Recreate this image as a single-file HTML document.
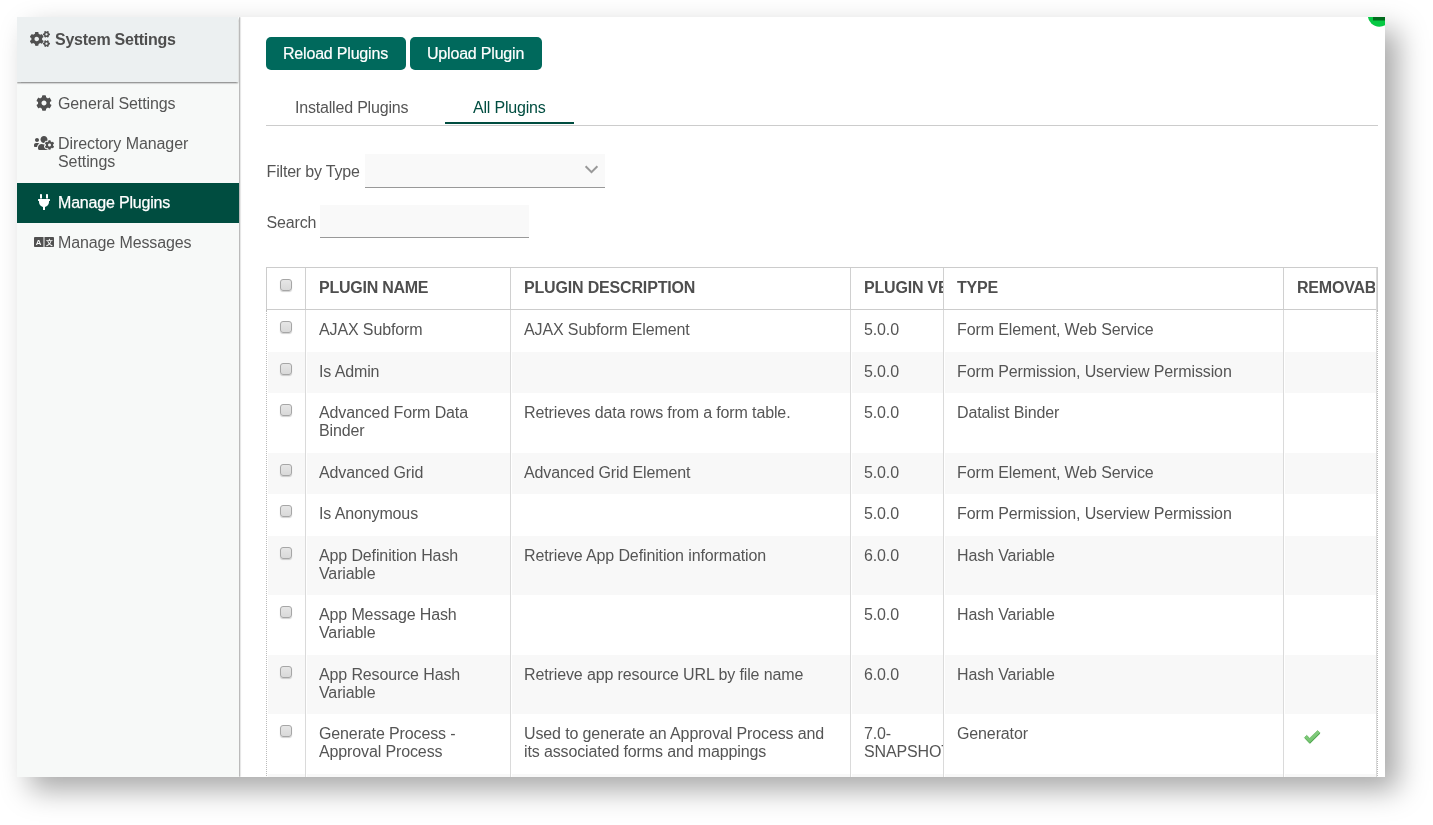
<!DOCTYPE html>
<html lang="en"><head><meta charset="utf-8"><title>Manage Plugins</title>
<style>
html,body{margin:0;padding:0;background:#fff;}
body{width:1433px;height:825px;overflow:hidden;position:relative;font-family:"Liberation Sans",Arial,sans-serif;font-size:16px;line-height:18px;letter-spacing:-0.19px;color:#555;}
#clip *{box-sizing:border-box}
#panel{position:absolute;left:17px;top:17px;width:1368px;height:760px;background:#fff;box-shadow:13px 13px 27px rgba(0,0,0,.34);}
#clip{position:absolute;left:0;top:0;width:1368px;height:760px;overflow:hidden;will-change:transform;}
#clip div,#clip span,#clip svg{position:absolute;}
#side{left:0;top:0;width:222px;height:760px;background:#f7f9f8;box-shadow:1px 0 1.5px rgba(0,0,0,.36);}
#shead{left:0;top:0;width:221px;height:65px;background:#ecf0f1;box-shadow:0 1.5px 1.5px rgba(0,0,0,.38);}
.t{white-space:nowrap;}
.b{font-weight:bold;letter-spacing:-0.25px;}
.btn{background:#00695c;border-radius:5px;color:#fff;height:33px;top:20px;}
.btn span{top:8px;-webkit-text-stroke:0.2px #fff;}
.inp{background:#f9f9f9;border-bottom:1px solid #999;}
.cb{width:12px;height:12px;border:1px solid #a6a6a6;border-radius:3px;background:linear-gradient(#e6e6e6,#d9d9d9);box-shadow:0 1px 1px rgba(0,0,0,.18);}
.st{background:#f8f8f8;}
.vl{width:2px;background:#fff;}
.vl i{position:absolute;left:0;top:0;bottom:0;width:1px;background:#dadada;}
.cell{overflow:hidden;}
.cell span{left:0;top:0;white-space:nowrap;letter-spacing:-0.125px;}
.cell span.b{letter-spacing:-0.25px;}
</style></head><body>
<div id="panel"><div id="clip">

<div id="side"></div><div id="shead"></div>
<svg style="left:13px;top:14px" width="20" height="16" viewBox="0 0 640 512"><path fill="#505050" d="M512.1 191l-8.2 14.3c-3 5.3-9.4 7.5-15.1 5.4-11.8-4.4-22.6-10.7-32.100-18.600-4.600-3.800-5.800-10.500-2.800-15.700l8.200-14.300c-6.900-8-12.300-17.300-15.900-27.400h-16.500c-6 0-11.200-4.300-12.200-10.300-2-12-2.100-24.600 0-37.100 1-6 6.200-10.400 12.200-10.400h16.500c3.600-10.100 9-19.400 15.900-27.400l-8.200-14.300c-3-5.200-1.900-11.900 2.800-15.700 9.500-7.900 20.400-14.200 32.100-18.600 5.700-2.100 12.100.1 15.100 5.400l8.200 14.300c10.500-1.900 21.200-1.900 31.700 0L552 6.300c3-5.300 9.400-7.500 15.100-5.400 11.800 4.400 22.600 10.700 32.100 18.600 4.600 3.800 5.800 10.500 2.800 15.700l-8.200 14.300c6.900 8 12.300 17.300 15.900 27.400h16.500c6 0 11.200 4.300 12.200 10.300 2 12 2.100 24.600 0 37.100-1 6-6.200 10.400-12.200 10.400h-16.500c-3.600 10.100-9 19.400-15.900 27.400l8.200 14.300c3 5.200 1.900 11.900-2.800 15.700-9.500 7.900-20.400 14.200-32.100 18.600-5.700 2.100-12.100-.1-15.100-5.400l-8.200-14.300c-10.400 1.900-21.200 1.900-31.700 0zm-10.500-58.800c38.500 29.600 82.400-14.300 52.800-52.800-38.500-29.700-82.400 14.300-52.800 52.800zM386.300 286.100l33.700 16.800c10.100 5.800 14.500 18.100 10.500 29.100-8.900 24.200-26.400 46.400-42.600 65.800-7.400 8.900-20.200 11.100-30.300 5.300l-29.100-16.800c-16 13.700-34.600 24.600-54.900 31.700v33.600c0 11.600-8.300 21.600-19.700 23.600-24.600 4.200-50.400 4.400-75.900 0-11.500-2-20-11.900-20-23.600V418c-20.300-7.200-38.900-18-54.900-31.700L74 403c-10 5.800-22.900 3.600-30.300-5.300-16.200-19.400-33.300-41.600-42.200-65.700-4-10.900.4-23.200 10.500-29.100l33.300-16.800c-3.900-20.900-3.900-42.400 0-63.400L12 205.800c-10.100-5.800-14.600-18.100-10.500-29 8.900-24.200 26-46.400 42.200-65.800 7.400-8.900 20.200-11.100 30.300-5.300l29.100 16.800c16-13.700 34.600-24.600 54.900-31.700V57.100c0-11.500 8.200-21.500 19.600-23.500 24.600-4.200 50.500-4.400 76-.1 11.500 2 20 11.900 20 23.600v33.600c20.300 7.200 38.900 18 54.900 31.700l29.100-16.800c10-5.800 22.900-3.600 30.300 5.300 16.200 19.400 33.200 41.600 42.100 65.800 4 10.900.1 23.200-10 29.100l-33.700 16.800c3.900 21 3.900 42.500 0 63.500zm-117.600 21.100c59.200-77-28.700-164.900-105.700-105.700-59.200 77 28.700 164.900 105.700 105.700zm243.400 182.700l-8.200 14.300c-3 5.300-9.400 7.500-15.100 5.400-11.800-4.400-22.600-10.700-32.100-18.600-4.600-3.800-5.800-10.500-2.800-15.700l8.200-14.300c-6.900-8-12.300-17.300-15.900-27.400h-16.500c-6 0-11.200-4.300-12.200-10.300-2-12-2.100-24.600 0-37.100 1-6 6.200-10.400 12.200-10.400h16.500c3.600-10.100 9-19.400 15.900-27.400l-8.200-14.300c-3-5.200-1.900-11.900 2.800-15.700 9.500-7.900 20.400-14.200 32.100-18.600 5.700-2.100 12.100.1 15.100 5.400l8.200 14.300c10.500-1.900 21.200-1.900 31.700 0l8.200-14.300c3-5.300 9.400-7.500 15.100-5.400 11.800 4.400 22.600 10.700 32.100 18.600 4.600 3.800 5.800 10.500 2.800 15.700l-8.200 14.300c6.900 8 12.300 17.300 15.900 27.400h16.500c6 0 11.200 4.300 12.200 10.300 2 12 2.100 24.600 0 37.100-1 6-6.200 10.400-12.200 10.400h-16.500c-3.600 10.100-9 19.400-15.900 27.400l8.200 14.300c3 5.200 1.900 11.900-2.800 15.700-9.500 7.900-20.400 14.200-32.100 18.600-5.700 2.100-12.100-.1-15.100-5.400l-8.200-14.300c-10.400 1.900-21.200 1.900-31.700 0zM501.600 431c38.500 29.600 82.400-14.300 52.800-52.800-38.500-29.600-82.400 14.300-52.800 52.800z"/></svg>
<span class="t b" style="left:38px;top:14px;color:#4e4e4e">System Settings</span>
<svg style="left:19px;top:78px" width="16" height="16" viewBox="0 0 512 512"><path fill="#505050" d="M487.4 315.7l-42.6-24.6c4.3-23.2 4.3-47 0-70.2l42.6-24.6c4.9-2.8 7.1-8.6 5.5-14-11.1-35.6-30-67.8-54.7-94.6-3.8-4.1-10-5.1-14.8-2.300L380.8 110c-17.9-15.400-38.500-27.300-60.800-35.100V25.800c0-5.600-3.900-10.500-9.400-11.700-36.700-8.200-74.300-7.800-109.200 0-5.500 1.200-9.400 6.100-9.400 11.700V75c-22.200 7.900-42.800 19.800-60.800 35.100L88.700 85.500c-4.900-2.800-11-1.900-14.800 2.300-24.700 26.700-43.600 58.900-54.700 94.600-1.700 5.400.6 11.200 5.500 14L67.300 221c-4.300 23.200-4.300 47 0 70.200l-42.600 24.600c-4.900 2.800-7.100 8.600-5.500 14 11.100 35.600 30 67.800 54.700 94.600 3.800 4.100 10 5.100 14.800 2.300l42.600-24.600c17.900 15.400 38.500 27.300 60.800 35.100v49.200c0 5.600 3.900 10.500 9.400 11.700 36.700 8.200 74.300 7.800 109.200 0 5.500-1.200 9.400-6.100 9.400-11.700v-49.200c22.200-7.900 42.800-19.800 60.800-35.100l42.600 24.600c4.900 2.800 11 1.900 14.800-2.300 24.700-26.700 43.600-58.900 54.700-94.600 1.500-5.500-.7-11.300-5.600-14.100zM256 336c-44.100 0-80-35.900-80-80s35.900-80 80-80 80 35.900 80 80-35.900 80-80 80z"/></svg>
<span class="t" style="left:41px;top:78px;letter-spacing:-0.11px">General Settings</span>
<svg style="left:17px;top:118px" width="20" height="16" viewBox="0 0 640 512"><path fill="#505050" d="M610.5 341.3c2.600-14.100 2.600-28.500 0-42.600l25.800-14.900c3-1.700 4.300-5.200 3.300-8.500-6.700-21.600-18.200-41.200-33.200-57.400-2.300-2.500-6-3.100-9-1.400l-25.800 14.900c-10.900-9.300-23.400-16.500-36.900-21.300v-29.800c0-3.400-2.400-6.400-5.700-7.100-22.300-5-45-4.800-66.200 0-3.300.7-5.700 3.700-5.700 7.100v29.800c-13.500 4.800-26 12-36.900 21.300l-25.800-14.900c-2.900-1.700-6.700-1.100-9 1.400-15 16.200-26.500 35.800-33.200 57.400-1 3.300.4 6.800 3.300 8.500l25.800 14.900c-2.600 14.100-2.600 28.500 0 42.600l-25.800 14.900c-3 1.700-4.300 5.200-3.300 8.500 6.700 21.600 18.200 41.100 33.200 57.400 2.300 2.500 6 3.100 9 1.400l25.800-14.900c10.900 9.300 23.400 16.500 36.900 21.300v29.800c0 3.400 2.400 6.400 5.700 7.100 22.300 5 45 4.800 66.200 0 3.300-.7 5.700-3.700 5.700-7.100v-29.800c13.500-4.800 26-12 36.900-21.300l25.800 14.900c2.900 1.700 6.700 1.100 9-1.400 15-16.200 26.500-35.800 33.200-57.400 1-3.300-.4-6.800-3.300-8.500l-25.800-14.900zM496 368.500c-26.800 0-48.500-21.800-48.500-48.500s21.800-48.500 48.500-48.500 48.500 21.800 48.500 48.500-21.700 48.500-48.500 48.500zM96 224c35.300 0 64-28.700 64-64s-28.700-64-64-64-64 28.700-64 64 28.700 64 64 64zm224 32c1.900 0 3.700-.5 5.600-.6 8.300-21.700 20.500-42.100 36.300-59.200 7.400-8 17.900-12.600 28.900-12.600 6.900 0 13.700 1.800 19.600 5.300l7.900 4.600c.8-.5 1.600-.9 2.400-1.400 7-14.600 11.200-30.800 11.200-48 0-61.900-50.100-112-112-112S208 82.100 208 144c0 61.900 50.100 112 112 112zm105.200 194.500c-2.300-1.200-4.600-2.600-6.800-3.900-8.200 4.800-15.300 9.800-27.500 9.800-10.900 0-21.400-4.600-28.900-12.600-18.300-19.800-32.300-43.900-40.200-69.600-10.700-34.500 24.900-49.700 25.800-50.300-.1-2.600-.1-5.200 0-7.800l-7.900-4.600c-3.800-2.200-7-5-9.800-8.100-3.300.2-6.500.6-9.800.6-24.600 0-47.600-6-68.500-16h-8.300C179.600 288 128 339.600 128 403.200V432c0 26.500 21.500 48 48 48h255.400c-3.700-6-6.200-12.800-6.200-20.300v-9.200zM173.100 274.600C161.500 263.100 145.600 256 128 256H64c-35.300 0-64 28.700-64 64v32c0 17.700 14.300 32 32 32h65.900c6.300-47.400 34.900-87.300 75.200-109.400z"/></svg>
<span class="t" style="left:41px;top:118px;letter-spacing:-0.08px">Directory Manager<br>Settings</span>
<div style="left:0;top:166px;width:222px;height:40px;background:#004d40"></div>
<svg style="left:21px;top:177px" width="12" height="16" viewBox="0 0 384 512"><path fill="#fff" d="M256 144V32c0-17.673 14.327-32 32-32s32 14.327 32 32v112h-64zm112 16H16c-8.837 0-16 7.163-16 16v32c0 8.837 7.163 16 16 16h16v32c0 77.406 54.969 141.971 128 156.796V512h64v-99.204c73.031-14.825 128-79.390 128-156.796v-32h16c8.837 0 16-7.163 16-16v-32c0-8.837-7.163-16-16-16zm-240-16V32c0-17.673-14.327-32-32-32S64 14.327 64 32v112h64z"/></svg>
<span class="t" style="left:41px;top:177px;color:#fff;-webkit-text-stroke:0.25px #fff">Manage Plugins</span>
<svg style="left:17px;top:217px" width="20" height="16" viewBox="0 0 640 512"><g fill="#505050"><path d="M0 120v272c0 13 11 24 24 24h280V96H24C11 96 0 107 0 120z"/><path d="M616 96H336v320h280c13 0 24-11 24-24V120c0-13-11-24-24-24z"/></g>
<text x="146" y="346" font-family="Liberation Sans" font-weight="bold" font-size="250" text-anchor="middle" fill="#f7f9f8" letter-spacing="0">A</text>
<text x="488" y="338" font-family="Noto Sans CJK SC" font-weight="bold" font-size="215" text-anchor="middle" fill="#f7f9f8" letter-spacing="0">文</text></svg>
<span class="t" style="left:41px;top:217px;letter-spacing:-0.12px">Manage Messages</span>
<div class="btn" style="left:249px;width:140px"><span class="t" style="left:17px">Reload Plugins</span></div>
<div class="btn" style="left:393px;width:132px"><span class="t" style="left:17px">Upload Plugin</span></div>
<span class="t" style="left:278px;top:82px">Installed Plugins</span>
<span class="t" style="left:456px;top:82px;color:#004d40">All Plugins</span>
<div style="left:249px;top:108px;width:1112px;height:1px;background:#ccc"></div>
<div style="left:428px;top:105px;width:129px;height:2px;background:#004d40"></div>
<span class="t" style="left:249.60000000000002px;top:146px">Filter by Type</span>
<div class="inp" style="left:348px;top:137px;width:240px;height:34px"></div>
<svg style="left:567px;top:147px" width="15" height="11" viewBox="0 0 15 11"><path d="M1.6 2.2 L7.5 8.1 L13.4 2.2" fill="none" stroke="#999" stroke-width="2"/></svg>
<span class="t" style="left:249.60000000000002px;top:197px">Search</span>
<div class="inp" style="left:303px;top:188px;width:209px;height:33px"></div>
<div style="left:249px;top:250px;width:1112px;height:43px;border:1px solid #ccc"></div>
<div style="left:249px;top:293px;width:1112px;height:480px;border-left:1px dotted #bbb;border-right:1px dotted #bbb"></div>
<div class="st" style="left:251px;top:335px;width:1108px;height:41px"></div>
<div class="st" style="left:251px;top:436px;width:1108px;height:41px"></div>
<div class="st" style="left:251px;top:519px;width:1108px;height:59px"></div>
<div class="st" style="left:251px;top:638px;width:1108px;height:59px"></div>
<div class="st" style="left:251px;top:757px;width:1108px;height:3px"></div>
<div class="vl" style="left:288px;top:293px;height:480px"><i></i></div>
<div style="left:288px;top:251px;width:1px;height:41px;background:#d0d0d0"></div>
<div class="vl" style="left:493px;top:293px;height:480px"><i></i></div>
<div style="left:493px;top:251px;width:1px;height:41px;background:#d0d0d0"></div>
<div class="vl" style="left:833px;top:293px;height:480px"><i></i></div>
<div style="left:833px;top:251px;width:1px;height:41px;background:#d0d0d0"></div>
<div class="vl" style="left:926px;top:293px;height:480px"><i></i></div>
<div style="left:926px;top:251px;width:1px;height:41px;background:#d0d0d0"></div>
<div class="vl" style="left:1266px;top:293px;height:480px"><i></i></div>
<div style="left:1266px;top:251px;width:1px;height:41px;background:#d0d0d0"></div>
<div style="left:1359px;top:251px;width:1px;height:520px;background:#dadada"></div>
<div class="cb" style="left:263px;top:262px"></div>
<div class="cell" style="left:302px;top:262px;width:191px;height:20px"><span class="b" style="color:#4e4e4e;letter-spacing:-0.25px">PLUGIN NAME</span></div>
<div class="cell" style="left:507px;top:262px;width:326px;height:20px"><span class="b" style="color:#4e4e4e;letter-spacing:-0.17px">PLUGIN DESCRIPTION</span></div>
<div class="cell" style="left:847px;top:262px;width:79px;height:20px"><span class="b" style="color:#4e4e4e;letter-spacing:-0.2px">PLUGIN VERSION</span></div>
<div class="cell" style="left:940px;top:262px;width:326px;height:20px"><span class="b" style="color:#4e4e4e;letter-spacing:-0.2px">TYPE</span></div>
<div class="cell" style="left:1280px;top:262px;width:78px;height:20px"><span class="b" style="color:#4e4e4e;letter-spacing:-0.2px">REMOVABLE</span></div>
<div class="cb" style="left:263px;top:304px"></div>
<div class="cell" style="left:302px;top:304px;width:191px;height:40px"><span>AJAX Subform</span></div>
<div class="cell" style="left:507px;top:304px;width:326px;height:40px"><span>AJAX Subform Element</span></div>
<div class="cell" style="left:847px;top:304px;width:79px;height:40px"><span>5.0.0</span></div>
<div class="cell" style="left:940px;top:304px;width:326px;height:40px"><span>Form Element, Web Service</span></div>
<div class="cb" style="left:263px;top:346px"></div>
<div class="cell" style="left:302px;top:346px;width:191px;height:40px"><span>Is Admin</span></div>
<div class="cell" style="left:847px;top:346px;width:79px;height:40px"><span>5.0.0</span></div>
<div class="cell" style="left:940px;top:346px;width:326px;height:40px"><span>Form Permission, Userview Permission</span></div>
<div class="cb" style="left:263px;top:387px"></div>
<div class="cell" style="left:302px;top:387px;width:191px;height:40px"><span>Advanced Form Data<br>Binder</span></div>
<div class="cell" style="left:507px;top:387px;width:326px;height:40px"><span>Retrieves data rows from a form table.</span></div>
<div class="cell" style="left:847px;top:387px;width:79px;height:40px"><span>5.0.0</span></div>
<div class="cell" style="left:940px;top:387px;width:326px;height:40px"><span>Datalist Binder</span></div>
<div class="cb" style="left:263px;top:447px"></div>
<div class="cell" style="left:302px;top:447px;width:191px;height:40px"><span>Advanced Grid</span></div>
<div class="cell" style="left:507px;top:447px;width:326px;height:40px"><span>Advanced Grid Element</span></div>
<div class="cell" style="left:847px;top:447px;width:79px;height:40px"><span>5.0.0</span></div>
<div class="cell" style="left:940px;top:447px;width:326px;height:40px"><span>Form Element, Web Service</span></div>
<div class="cb" style="left:263px;top:488px"></div>
<div class="cell" style="left:302px;top:488px;width:191px;height:40px"><span>Is Anonymous</span></div>
<div class="cell" style="left:847px;top:488px;width:79px;height:40px"><span>5.0.0</span></div>
<div class="cell" style="left:940px;top:488px;width:326px;height:40px"><span>Form Permission, Userview Permission</span></div>
<div class="cb" style="left:263px;top:530px"></div>
<div class="cell" style="left:302px;top:530px;width:191px;height:40px"><span>App Definition Hash<br>Variable</span></div>
<div class="cell" style="left:507px;top:530px;width:326px;height:40px"><span>Retrieve App Definition information</span></div>
<div class="cell" style="left:847px;top:530px;width:79px;height:40px"><span>6.0.0</span></div>
<div class="cell" style="left:940px;top:530px;width:326px;height:40px"><span>Hash Variable</span></div>
<div class="cb" style="left:263px;top:589px"></div>
<div class="cell" style="left:302px;top:589px;width:191px;height:40px"><span>App Message Hash<br>Variable</span></div>
<div class="cell" style="left:847px;top:589px;width:79px;height:40px"><span>5.0.0</span></div>
<div class="cell" style="left:940px;top:589px;width:326px;height:40px"><span>Hash Variable</span></div>
<div class="cb" style="left:263px;top:649px"></div>
<div class="cell" style="left:302px;top:649px;width:191px;height:40px"><span>App Resource Hash<br>Variable</span></div>
<div class="cell" style="left:507px;top:649px;width:326px;height:40px"><span>Retrieve app resource URL by file name</span></div>
<div class="cell" style="left:847px;top:649px;width:79px;height:40px"><span>6.0.0</span></div>
<div class="cell" style="left:940px;top:649px;width:326px;height:40px"><span>Hash Variable</span></div>
<div class="cb" style="left:263px;top:708px"></div>
<div class="cell" style="left:302px;top:708px;width:191px;height:40px"><span>Generate Process -<br>Approval Process</span></div>
<div class="cell" style="left:507px;top:708px;width:326px;height:40px"><span>Used to generate an Approval Process and<br>its associated forms and mappings</span></div>
<div class="cell" style="left:847px;top:708px;width:79px;height:40px"><span>7.0-<br>SNAPSHOT</span></div>
<div class="cell" style="left:940px;top:708px;width:326px;height:40px"><span>Generator</span></div>
<svg style="left:1286px;top:712px" width="18" height="16" viewBox="0 0 18 16"><defs><linearGradient id="tk" x1="0" y1="0" x2="0" y2="1"><stop offset="0" stop-color="#86cc80"/><stop offset="1" stop-color="#74c470"/></linearGradient></defs><path transform="translate(0.35,0.7)" d="M1.4 8.6 L3.7 6.3 L6.6 9.2 L14.6 1.5 L16.9 3.8 L6.6 14.1 Z" fill="#3b963b"/><path d="M1.4 8.6 L3.7 6.3 L6.6 9.2 L14.6 1.5 L16.9 3.8 L6.6 14.1 Z" fill="url(#tk)" stroke="#62b55e" stroke-width="0.6" stroke-linejoin="round"/></svg>
<svg style="left:1343px;top:0" width="25" height="14" viewBox="1360 17 25 14"><circle cx="1379.3" cy="15.2" r="11.5" fill="#06c943"/><rect x="1373" y="17" width="14" height="3.5" fill="#006b1c"/></svg>
</div></div></body></html>
